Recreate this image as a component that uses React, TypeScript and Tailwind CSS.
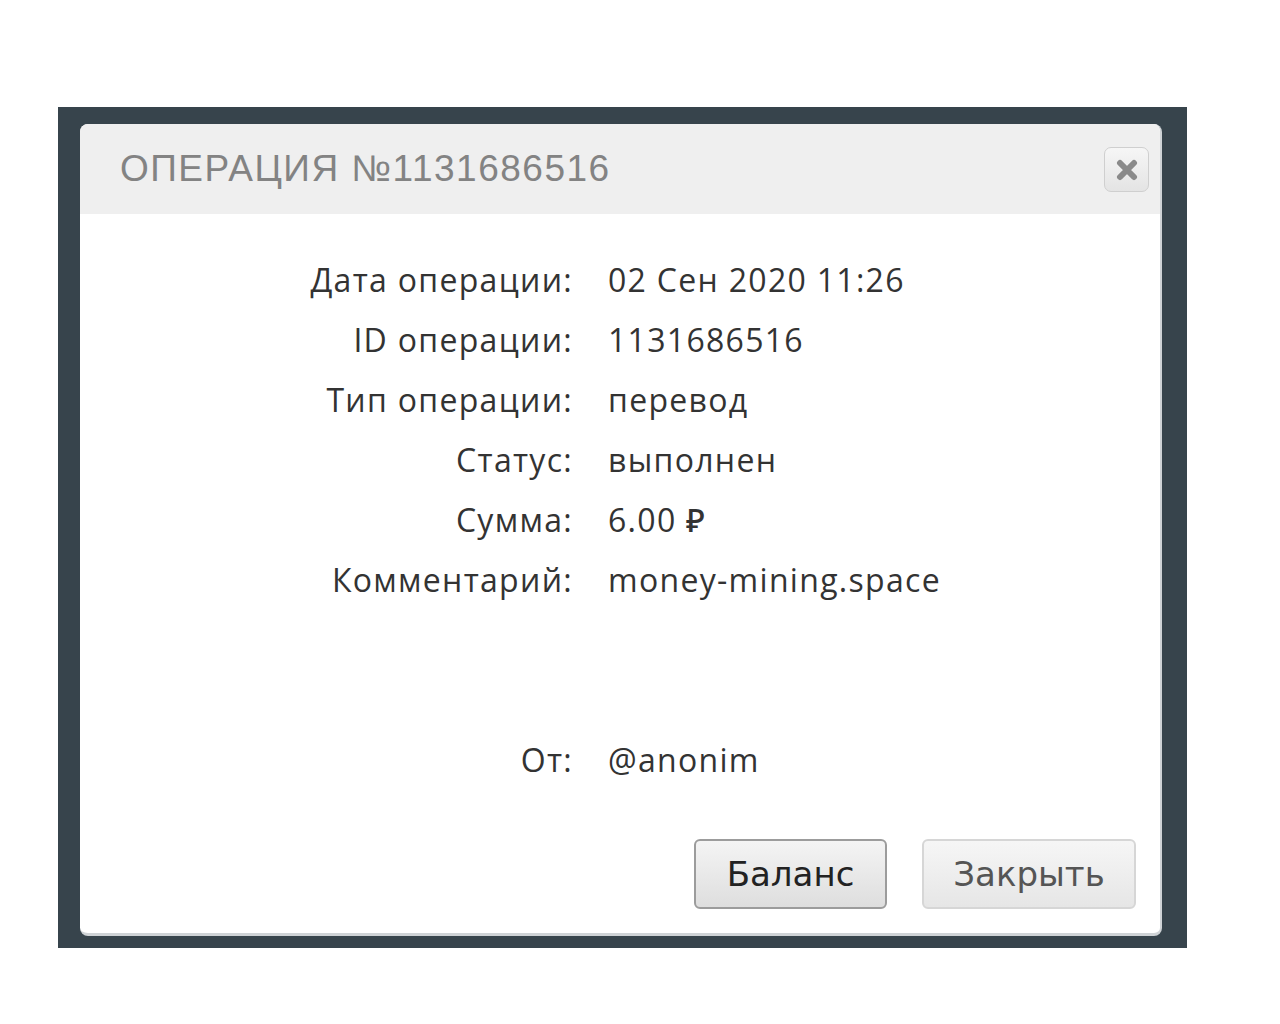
import React from "react";

const rows: [string, string][] = [
  ["Дата операции:", "02 Сен 2020 11:26"],
  ["ID операции:", "1131686516"],
  ["Тип операции:", "перевод"],
  ["Статус:", "выполнен"],
  ["Сумма:", "6.00 ₽"],
  ["Комментарий:", "money-mining.space"],
];

function Row({ label, value }: { label: string; value: string }) {
  return (
    <div className="flex h-[60px] items-center">
      <div className="w-[493px] shrink-0 text-right">{label}</div>
      <div className="pl-[35px]">{value}</div>
    </div>
  );
}

export default function App() {
  return (
    <div className="min-h-[1024px] w-[1280px] bg-white pt-[107px] pl-[58px]">
      <div className="h-[841px] w-[1129px] bg-[#37444c] pl-[22px] pt-[17px]">
        <div className="flex h-[812px] w-[1082px] flex-col overflow-hidden rounded-[8px] border-b-[3px] border-r-[2px] border-[#cfd3d6] bg-white">
          <div className="flex h-[90px] shrink-0 items-center justify-between bg-[#efefef] pl-[40px] pr-[11px]">
            <div
              className="text-[37px] tracking-[1.5px] text-[#838383]"
              style={{ fontFamily: '"Liberation Sans", Arial, sans-serif' }}
            >
              ОПЕРАЦИЯ №1131686516
            </div>
            <div className="mt-[1px] flex h-[45px] w-[45px] items-center justify-center rounded-[7px] border border-[#cfcfcf] bg-gradient-to-b from-[#f6f6f6] to-[#e4e4e4]">
              <svg width="22" height="22" viewBox="0 0 22 22">
                <path d="M4 4 L18 18 M18 4 L4 18" stroke="#8a8a8a" strokeWidth="6" strokeLinecap="round" />
              </svg>
            </div>
          </div>
          <div
            className="flex flex-1 flex-col pt-[36px] text-[32px] font-medium tracking-[1.3px] text-[#333333]"
            style={{ fontFamily: '"Open Sans", "Noto Sans", sans-serif' }}
          >
            {rows.map(([l, v]) => (
              <Row key={l} label={l} value={v} />
            ))}
            <div className="h-[120px]" />
            <Row label="От:" value="@anonim" />
            <div className="flex flex-1 items-end justify-end gap-[35px] pb-[24px] pr-[24px] tracking-normal">
              <button
                className="flex h-[70px] w-[193px] items-center justify-center rounded-[6px] border-2 border-[#9c9c9c] bg-gradient-to-b from-[#f4f4f4] to-[#dedede] text-[34px] font-normal text-[#222222]"
                style={{ fontFamily: '"DejaVu Sans", Verdana, sans-serif' }}
              >
                Баланс
              </button>
              <button
                className="flex h-[70px] w-[214px] items-center justify-center rounded-[6px] border-2 border-[#d6d6d6] bg-gradient-to-b from-[#f6f6f6] to-[#e6e6e6] text-[34px] font-normal text-[#555555]"
                style={{ fontFamily: '"DejaVu Sans", Verdana, sans-serif' }}
              >
                Закрыть
              </button>
            </div>
          </div>
        </div>
      </div>
    </div>
  );
}
